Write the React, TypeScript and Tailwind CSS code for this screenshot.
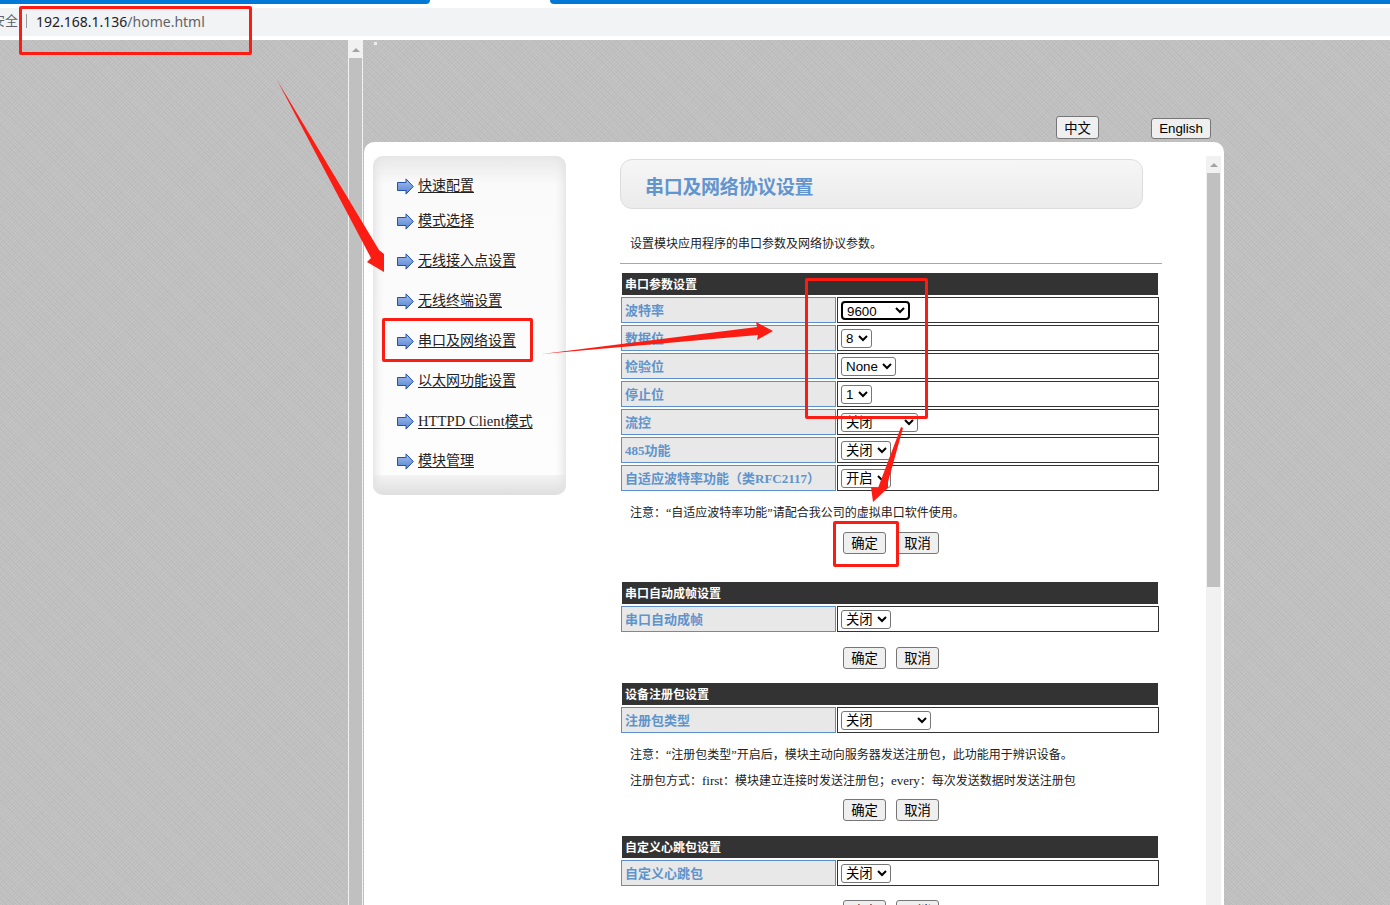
import type { ReactNode } from "react";

const SANS = "font-['Liberation_Sans','Noto_Sans_CJK_SC',sans-serif]";

function Btn({ label, className = "" }: { label: string; className?: string }) {
  return (
    <button className={`h-[22px] rounded-[3px] border border-[#767676] bg-[#efefef] pt-[2px] text-[13.33px] leading-none text-black ${SANS} ${className}`}>
      {label}
    </button>
  );
}

function Pair() {
  return (
    <div className="flex gap-[10px] pl-[223px]">
      <Btn label="确定" className="w-[43px]" />
      <Btn label="取消" className="w-[43px]" />
    </div>
  );
}

function Row({ label, value, w, focus }: { label: string; value: string; w: string; focus?: boolean }) {
  return (
    <div className="flex h-[26px] gap-[1px]">
      <div className="flex w-[215px] items-center border border-[#5b8fc7] bg-[#e8e8e8] pl-[3px] pt-[1px] text-[13px] font-bold text-[#5f93cc]">
        {label}
      </div>
      <div className="flex w-[322px] items-center border border-[#333] bg-white pl-[3px]">
        <select
          defaultValue={value}
          className={`h-[19px] ${w} ${focus ? "rounded-[4px] border-2 border-black" : "rounded-[3px] border border-[#767676]"} bg-white text-[13.33px] leading-none text-black ${SANS}`}
        >
          <option>{value}</option>
        </select>
      </div>
    </div>
  );
}

function Head({ label }: { label: string }) {
  return (
    <div className="mb-[2px] ml-[1px] flex h-[22px] w-[536px] items-center bg-[#333] pl-[3px] pt-[2px] text-[12px] font-bold text-white">
      {label}
    </div>
  );
}

function Note({ children, className = "" }: { children: ReactNode; className?: string }) {
  return <p className={`pl-[10px] text-[12px] leading-[16px] text-[#222] ${className}`}>{children}</p>;
}

const menu: [ReactNode, string][] = [
  ["快速配置", "mt-[21px]"],
  ["模式选择", "mt-[17px]"],
  ["无线接入点设置", "mt-[22px]"],
  ["无线终端设置", "mt-[22px]"],
  ["串口及网络设置", "mt-[22px]"],
  ["以太网功能设置", "mt-[22px]"],
  [<><span className="text-[14.67px]">HTTPD Client</span>模式</>, "mt-[22px]"],
  ["模块管理", "mt-[22px]"],
];

function MenuArrow() {
  return (
    <svg width="17" height="17" viewBox="0 0 17 17" className="shrink-0">
      <defs>
        <linearGradient id="ma" x1="0" y1="0" x2="0" y2="1">
          <stop offset="0" stopColor="#a4bfec" />
          <stop offset="1" stopColor="#5583d4" />
        </linearGradient>
      </defs>
      <path d="M0.5 4.5H9V0.9L16.3 8.5L9 16.1V12.5H0.5Z" fill="url(#ma)" stroke="#2450ad" strokeWidth="1" />
    </svg>
  );
}

function ScrollBar({ className = "", thumb }: { className?: string; thumb: string }) {
  return (
    <div className={`flex shrink-0 flex-col items-center bg-[#f1f1f1] ${className}`}>
      <div className="flex h-[17px] w-full shrink-0 items-start justify-center pt-[7px]">
        <div className="h-0 w-0 border-x-[4px] border-b-[4px] border-x-transparent border-b-[#a3a3a3]" />
      </div>
      <div className={`w-[13px] shrink-0 bg-[#c0c0c0] ${thumb}`} />
    </div>
  );
}

const PATTERN =
  "bg-[#c1c1c1] [background-image:repeating-linear-gradient(45deg,#0000_0px,#0000_1.5px,#00000009_1.5px,#00000009_2.5px),repeating-linear-gradient(-45deg,#0000_0px,#0000_1.5px,#ffffff0f_1.5px,#ffffff0f_2.5px)]";

export default function App() {
  return (
    <div className="relative flex h-[905px] w-[1390px] flex-col overflow-hidden bg-white font-['Liberation_Serif','Noto_Sans_CJK_SC',serif]">
      {/* browser chrome */}
      <div className="flex h-[4px] shrink-0 justify-between bg-white">
        <div className="w-[430px] rounded-br-[5px] bg-[#0078d7]" />
        <div className="w-[840px] rounded-bl-[5px] bg-[#0078d7]" />
      </div>
      <div className="mt-[4px] flex h-[28px] shrink-0 items-center overflow-hidden bg-[#f1f3f5] pb-[2px] font-['Noto_Sans','Noto_Sans_CJK_SC',sans-serif] text-[14px]">
        <span className="ml-[-8px] w-[26px] shrink-0 whitespace-nowrap text-[13px] text-[#5f6368]">安全</span>
        <span className="ml-[8px] h-[14px] w-[1px] shrink-0 bg-[#9a9a9a]" />
        <span className="ml-[9px] text-[#202124]">192.168.1.136</span>
        <span className="text-[#5f6368]">/home.html</span>
      </div>
      <div className="h-[4px] shrink-0 bg-white" />

      {/* frames */}
      <div className={`flex min-h-0 flex-1 ${PATTERN}`}>
        <div className="w-[348px] shrink-0" />
        <ScrollBar className="w-[15px] pt-[1px]" thumb="h-[900px]" />

        <div className="flex min-w-0 flex-1 flex-col">
          <div className="flex h-[102px] shrink-0 items-end pb-[3px]">
            <button className={`ml-[693px] h-[23px] w-[43px] rounded-[3px] border border-[#767676] bg-[#efefef] pt-[2px] text-[13.33px] leading-none text-black ${SANS}`}>中文</button>
            <button className={`ml-[52px] h-[21px] w-[60px] rounded-[3px] border border-[#767676] bg-[#efefef] text-[13.33px] leading-none text-black ${SANS}`}>English</button>
          </div>

          {/* card */}
          <div className="ml-[1px] flex min-h-0 w-[860px] flex-1 overflow-hidden rounded-t-[10px] bg-white pl-[9px] pt-[14px]">
            {/* side menu */}
            <div className="flex h-[339px] w-[193px] shrink-0 flex-col rounded-[10px] bg-[linear-gradient(#e8e8e8,#fafafa_28px,#fdfdfd_319px,#f4f4f4_319px,#dedede_100%)] pl-[24px] shadow-[inset_9px_0_8px_-6px_#e2e2e2,inset_-9px_0_8px_-6px_#e2e2e2]">
              {menu.map(([t, m], i) => (
                <div key={i} className={`flex h-[18px] shrink-0 items-center gap-[4px] text-[14px] text-[#222] ${m}`}>
                  <MenuArrow />
                  <span className="pb-[1px] underline underline-offset-[2px]">{t}</span>
                </div>
              ))}
            </div>

            {/* settings */}
            <div className="ml-[54px] flex h-[770px] w-[586px] shrink-0 flex-col overflow-hidden pt-[3px]">
              <div className="flex h-[50px] w-[523px] shrink-0 items-center rounded-[12px] border border-[#dcdcdc] bg-gradient-to-b from-[#f6f6f6] to-[#ebebeb] pl-[24px] pt-[4px] font-['Noto_Sans_CJK_SC',sans-serif] text-[19px] font-bold tracking-[-0.3px] text-[#6295cf]">
                串口及网络协议设置
              </div>
              <Note className="mt-[27px]">设置模块应用程序的串口参数及网络协议参数。</Note>
              <div className="mt-[11px] h-[1px] w-[542px] shrink-0 bg-[#a8a8a8]" />

              <div className="ml-[1px] mt-[9px] flex w-[538px] flex-col">
                <Head label="串口参数设置" />
                <div className="flex flex-col gap-[2px]">
                  <Row label="波特率" value="9600" w="w-[69px]" focus />
                  <Row label="数据位" value="8" w="w-[31px]" />
                  <Row label="检验位" value="None" w="w-[55px]" />
                  <Row label="停止位" value="1" w="w-[31px]" />
                  <Row label="流控" value="关闭" w="w-[77px]" />
                  <Row label="485功能" value="关闭" w="w-[50px]" />
                  <Row label="自适应波特率功能（类RFC2117）" value="开启" w="w-[50px]" />
                </div>
              </div>
              <Note className="mt-[14px]">注意：“自适应波特率功能”请配合我公司的虚拟串口软件使用。</Note>
              <div className="mt-[11px]"><Pair /></div>

              <div className="ml-[1px] mt-[28px] flex w-[538px] flex-col">
                <Head label="串口自动成帧设置" />
                <Row label="串口自动成帧" value="关闭" w="w-[50px]" />
              </div>
              <div className="mt-[15px]"><Pair /></div>

              <div className="ml-[1px] mt-[14px] flex w-[538px] flex-col">
                <Head label="设备注册包设置" />
                <Row label="注册包类型" value="关闭" w="w-[90px]" />
              </div>
              <Note className="mt-[14px]">注意：“注册包类型”开启后，模块主动向服务器发送注册包，此功能用于辨识设备。</Note>
              <Note className="mt-[10px]">注册包方式：<span className="text-[13px]">first</span>：模块建立连接时发送注册包；<span className="text-[13px]">every</span>：每次发送数据时发送注册包</Note>
              <div className="mt-[10px]"><Pair /></div>

              <div className="ml-[1px] mt-[15px] flex w-[538px] flex-col">
                <Head label="自定义心跳包设置" />
                <Row label="自定义心跳包" value="关闭" w="w-[50px]" />
              </div>
              <div className="mt-[14px]"><Pair /></div>
            </div>

            <ScrollBar className="w-[15px]" thumb="h-[414px]" />
          </div>
        </div>
      </div>

      {/* small stray image marker at the top of the right frame */}
      <div className="absolute left-[374px] top-[42px] h-[3px] w-[3px] bg-[#ededed]" />

      {/* annotations drawn over the screenshot */}
      <div className="absolute left-[19px] top-[6px] h-[49px] w-[233px] rounded-[2px] border-[3px] border-[#fb1d14]" />
      <div className="absolute left-[382px] top-[318px] h-[44px] w-[151px] rounded-[2px] border-[3px] border-[#fb1d14]" />
      <div className="absolute left-[805px] top-[278px] h-[141px] w-[123px] rounded-[2px] border-[3px] border-[#fb1d14]" />
      <div className="absolute left-[833px] top-[521px] h-[46px] w-[66px] rounded-[2px] border-[3px] border-[#fb1d14]" />
      <svg className="pointer-events-none absolute left-0 top-0" width="1390" height="905" viewBox="0 0 1390 905">
        <polygon fill="#fb1d14" points="277,80 379,250 384,254 384,272 367,262 371,258" />
        <polygon fill="#fb1d14" points="542,354 757,327 756,322 773,331 757,340 758,335" />
        <polygon fill="#fb1d14" points="903,428 888,482 888,488 873,502 871,487 878,488 901,427" />
      </svg>
    </div>
  );
}
